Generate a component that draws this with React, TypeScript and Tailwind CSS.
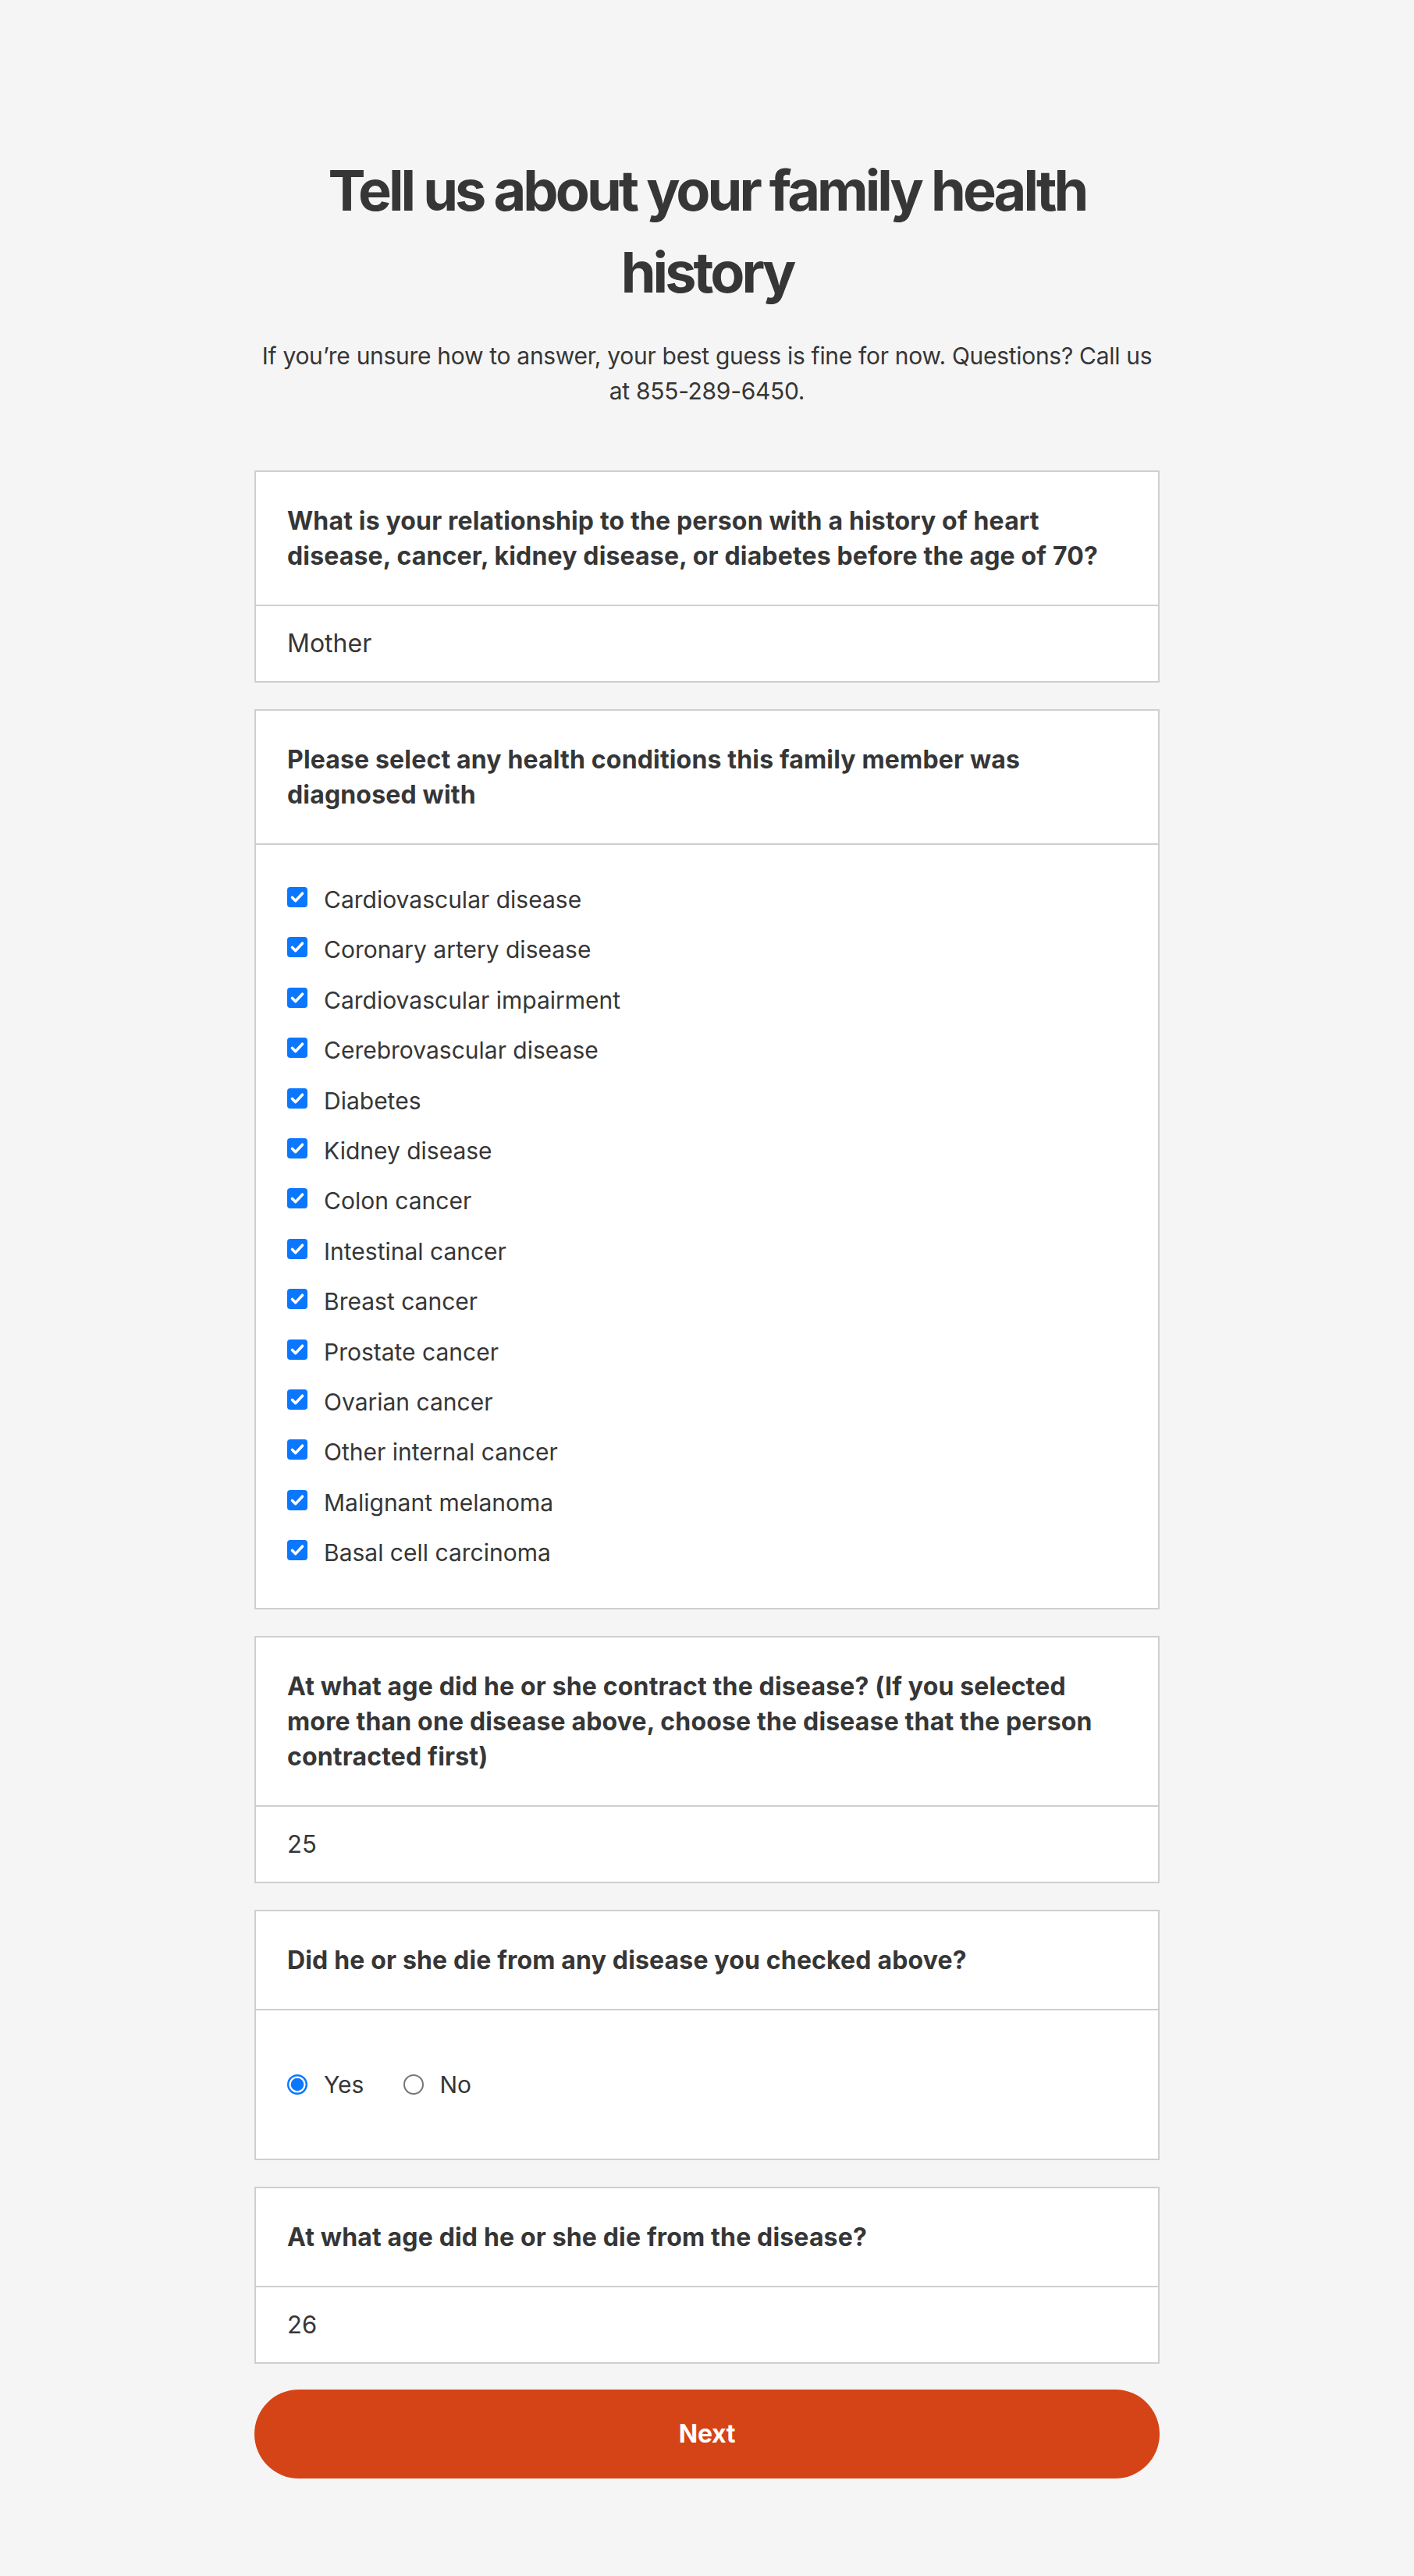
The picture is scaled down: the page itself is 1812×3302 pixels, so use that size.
import React from "react";

const CONDITIONS = [
  "Cardiovascular disease",
  "Coronary artery disease",
  "Cardiovascular impairment",
  "Cerebrovascular disease",
  "Diabetes",
  "Kidney disease",
  "Colon cancer",
  "Intestinal cancer",
  "Breast cancer",
  "Prostate cancer",
  "Ovarian cancer",
  "Other internal cancer",
  "Malignant melanoma",
  "Basal cell carcinoma",
];

function CheckBox() {
  return (
    <svg width="26" height="26" viewBox="0 0 26 26" className="shrink-0 mt-[6px]" aria-hidden>
      <rect x="0" y="0" width="26" height="26" rx="4" fill="#0b77ff" />
      <path
        d="M6.5 13.5 L10.8 17.6 L19.5 8.2"
        fill="none"
        stroke="#fff"
        strokeWidth="3.6"
        strokeLinecap="round"
        strokeLinejoin="round"
      />
    </svg>
  );
}

function Radio({ checked }: { checked: boolean }) {
  return (
    <svg width="26" height="26" viewBox="0 0 26 26" className="shrink-0" aria-hidden>
      {checked ? (
        <>
          <circle cx="13" cy="13" r="11.8" fill="#fff" stroke="#0b77ff" strokeWidth="2.4" />
          <circle cx="13" cy="13" r="8.3" fill="#0b77ff" />
        </>
      ) : (
        <circle cx="13" cy="13" r="12" fill="#fff" stroke="#767676" strokeWidth="2" />
      )}
    </svg>
  );
}

function Card({ question, children }: { question: string; children: React.ReactNode }) {
  return (
    <section className="bg-white border-2 border-[#cfcfcf]">
      <h2 className="p-[40px] border-b-2 border-[#cfcfcf] text-[32px] leading-[45px] font-bold tracking-[0.005em]">
        {question}
      </h2>
      {children}
    </section>
  );
}

function TextAnswer({ value, size = "text-[31px]" }: { value: string; size?: string }) {
  return (
    <div className={`h-[96px] px-[40px] flex items-center ${size}`}>{value}</div>
  );
}

export default function App() {
  return (
    <div className="min-h-screen bg-[#f5f5f5] text-[#363636] font-['Inter',sans-serif]">
      <div className="mx-auto w-[1160px] pt-[191px] pb-[124px]">
        <h1 className="text-center text-[72px] leading-[105px] font-bold tracking-[-0.055em]">
          Tell us about your family health history
        </h1>
        <p className="mt-[33px] text-center text-[30px] leading-[45px] tracking-[-0.01em]">
          If you’re unsure how to answer, your best guess is fine for now. Questions? Call us at
          855-289-6450.
        </p>

        <div className="mt-[79px] flex flex-col gap-[34px]">
          <Card question="What is your relationship to the person with a history of heart disease, cancer, kidney disease, or diabetes before the age of 70?">
            <TextAnswer value="Mother" size="text-[32px]" />
          </Card>

          <Card question="Please select any health conditions this family member was diagnosed with">
            <ul className="px-[40px] pt-[48px] pb-[48px] flex flex-col gap-[19.4px]">
              {CONDITIONS.map((c) => (
                <li key={c} className="flex items-start gap-[21px] text-[30px] leading-[45px]">
                  <CheckBox />
                  <span>{c}</span>
                </li>
              ))}
            </ul>
          </Card>

          <Card question="At what age did he or she contract the disease? (If you selected more than one disease above, choose the disease that the person contracted first)">
            <TextAnswer value="25" />
          </Card>

          <Card question="Did he or she die from any disease you checked above?">
            <div className="h-[190px] px-[40px] flex items-center text-[30px] leading-[45px]">
              <label className="flex items-center gap-[21px]">
                <Radio checked />
                <span>Yes</span>
              </label>
              <label className="flex items-center gap-[20px] ml-[51px]">
                <Radio checked={false} />
                <span>No</span>
              </label>
            </div>
          </Card>

          <div className="flex flex-col gap-[33px]">
            <Card question="At what age did he or she die from the disease?">
              <TextAnswer value="26" />
            </Card>
            <button className="h-[114px] w-full rounded-full bg-[#d54416] text-white text-[32px] font-bold tracking-[-0.01em]">
              Next
            </button>
          </div>
        </div>
      </div>
    </div>
  );
}
